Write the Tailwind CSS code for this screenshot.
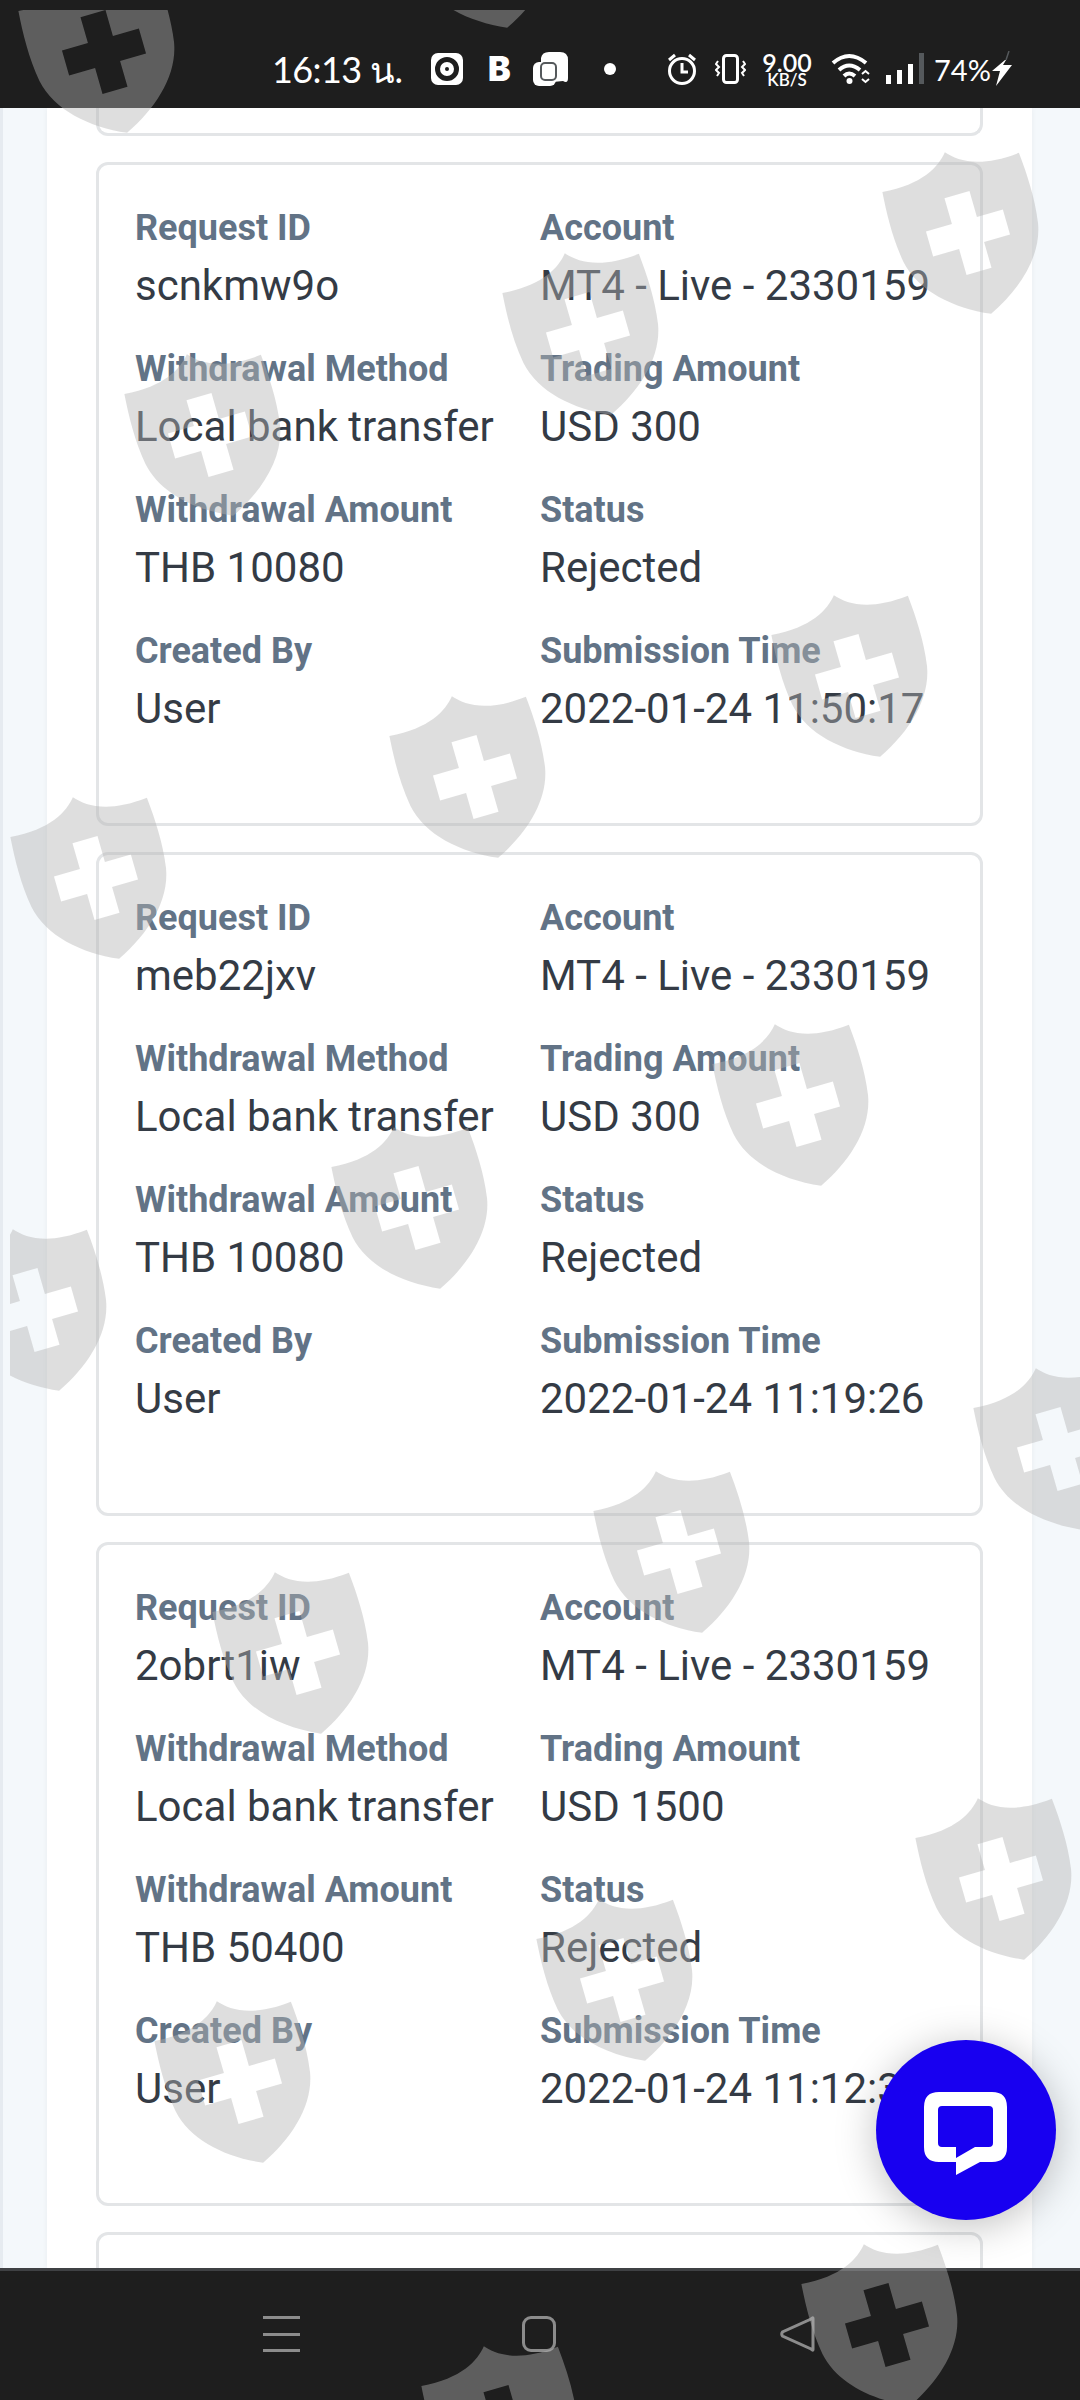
<!DOCTYPE html>
<html lang="en">
<head>
  <meta charset="UTF-8" />
  <title>Withdrawal History</title>
  <script src="https://cdn.jsdelivr.net/npm/@tailwindcss/browser@4"></script>
</head>
<body class="font-['Roboto',sans-serif]">
  <div class="relative w-[1080px] h-[2400px] overflow-hidden flex flex-col bg-[#f4f8fb]">

    <!-- status bar -->
    <div class="h-[108px] shrink-0 bg-[#1e1e1e] text-white flex items-center pl-[272px] pt-[30px]">
      <div class="w-[131px] whitespace-nowrap text-[36px] tracking-[-0.6px] font-normal font-['Lato','Noto_Sans',sans-serif] leading-none">16:13 น.</div>
      <svg class="ml-[28px]" width="32" height="34" viewBox="0 0 32 34">
        <rect x="0" y="1" width="32" height="32" rx="7" fill="#fff" />
        <circle cx="16" cy="17" r="9.5" fill="none" stroke="#1e1e1e" stroke-width="5" />
        <circle cx="16" cy="17" r="2" fill="#1e1e1e" />
      </svg>
      <div class="ml-[25px] w-[23px] text-[34px] font-black leading-none font-['Inter',sans-serif]">B</div>
      <svg class="ml-[22px]" width="35" height="34" viewBox="0 0 35 34">
        <path d="M8 6 Q9 0 16 0 H27 Q35 0 35 8 V26 Q35 32 30 29 L20 30 H8Z" fill="#fff" />
        <rect x="0" y="10" width="23" height="24" rx="6" fill="#fff" />
        <rect x="8" y="11" width="15" height="17" rx="4" fill="none" stroke="#55595c" stroke-width="2" />
      </svg>
      <div class="ml-[36px] w-[12px] h-[12px] rounded-full bg-white"></div>
      <svg class="ml-[51px]" width="30" height="34" viewBox="0 0 30 34">
        <circle cx="15" cy="19" r="12.5" fill="none" stroke="#fff" stroke-width="3" />
        <path d="M15 11 V20 H21" fill="none" stroke="#fff" stroke-width="3" />
        <path d="M2 8 L8 3 M28 8 L22 3" stroke="#fff" stroke-width="3" />
      </svg>
      <svg class="ml-[18px]" width="31" height="30" viewBox="0 0 31 30">
        <rect x="8.500" y="1.500" width="14" height="27" rx="3" fill="none" stroke="#fff" stroke-width="3" />
        <path d="M3 7 L1 10 L4 13 L1 16 L4 19 L2 22 M28 7 L30 10 L27 13 L30 16 L27 19 L29 22" fill="none" stroke="#fff" stroke-width="2" />
      </svg>
      <div class="ml-[17px] w-[48px] flex flex-col items-center font-['Lato',sans-serif] font-semibold">
        <div class="text-[25px] leading-[20px]">9.00</div>
        <div class="text-[17px] leading-[15px]">KB/S</div>
      </div>
      <svg class="ml-[20px]" width="40" height="32" viewBox="0 0 40 32">
        <path d="M2 10 Q18 -4 35 10 M8 17 Q18 8 29 17 M13 23 Q18 18 24 23" fill="none" stroke="#fff" stroke-width="4" />
        <circle cx="18.500" cy="28" r="3" fill="#fff" />
        <path d="M31 21 L34.500 18 L38 21 M31 26 L34.500 29 L38 26" fill="none" stroke="#fff" stroke-width="2" />
      </svg>
      <svg class="ml-[15px]" width="38" height="32" viewBox="0 0 38 32">
        <rect x="0" y="22" width="5" height="9" fill="#fff" />
        <rect x="11" y="17" width="5" height="14" fill="#fff" />
        <rect x="22" y="11" width="5" height="20" fill="#fff" />
        <rect x="33" y="0" width="5" height="31" fill="#55595c" />
      </svg>
      <div class="ml-[10px] w-[52px] text-[29px] leading-none font-['Lato',sans-serif]">74%</div>
      <svg class="ml-[5px]" width="22" height="36" viewBox="0 0 22 36">
        <path d="M14 9 L1 20 H9 L5 35 L21 14 H12 L15 9Z" fill="#fff" />
        <path d="M15 9 L18 0" stroke="#55595c" stroke-width="1.500" />
      </svg>
    </div>

    <!-- page -->
    <div class="flex-1 min-h-0 overflow-hidden pl-[3px] border-l-[3px] border-[#e6ebf0]">
      <div class="ml-[41px] w-[985px] h-full bg-white shadow-[0_0_6px_rgba(0,0,0,0.05)] pl-[49px] flex flex-col gap-[26px]">
        <div class="w-[887px] h-[28px] shrink-0 border-[3px] border-t-0 border-[#e3e5e7] rounded-b-[12px]"></div>

        <div class="w-[887px] h-[664px] shrink-0 border-[3px] border-[#e3e5e7] rounded-[12px] pl-[36px] pt-[35px] grid grid-cols-[405px_405px] auto-rows-[141px] whitespace-nowrap">
          <div><div class="text-[36px] leading-[56px] font-bold text-[#627386]">Request ID</div><div class="text-[42px] leading-[60px] text-[#343b45]">scnkmw9o</div></div>
          <div><div class="text-[36px] leading-[56px] font-bold text-[#627386]">Account</div><div class="text-[42px] leading-[60px] text-[#343b45]">MT4 - Live - 2330159</div></div>
          <div><div class="text-[36px] leading-[56px] font-bold text-[#627386]">Withdrawal Method</div><div class="text-[42px] leading-[60px] text-[#343b45]">Local bank transfer</div></div>
          <div><div class="text-[36px] leading-[56px] font-bold text-[#627386]">Trading Amount</div><div class="text-[42px] leading-[60px] text-[#343b45]">USD 300</div></div>
          <div><div class="text-[36px] leading-[56px] font-bold text-[#627386]">Withdrawal Amount</div><div class="text-[42px] leading-[60px] text-[#343b45]">THB 10080</div></div>
          <div><div class="text-[36px] leading-[56px] font-bold text-[#627386]">Status</div><div class="text-[42px] leading-[60px] text-[#343b45]">Rejected</div></div>
          <div><div class="text-[36px] leading-[56px] font-bold text-[#627386]">Created By</div><div class="text-[42px] leading-[60px] text-[#343b45]">User</div></div>
          <div><div class="text-[36px] leading-[56px] font-bold text-[#627386]">Submission Time</div><div class="text-[42px] leading-[60px] text-[#343b45]">2022-01-24 11:50:17</div></div>
        </div>

        <div class="w-[887px] h-[664px] shrink-0 border-[3px] border-[#e3e5e7] rounded-[12px] pl-[36px] pt-[35px] grid grid-cols-[405px_405px] auto-rows-[141px] whitespace-nowrap">
          <div><div class="text-[36px] leading-[56px] font-bold text-[#627386]">Request ID</div><div class="text-[42px] leading-[60px] text-[#343b45]">meb22jxv</div></div>
          <div><div class="text-[36px] leading-[56px] font-bold text-[#627386]">Account</div><div class="text-[42px] leading-[60px] text-[#343b45]">MT4 - Live - 2330159</div></div>
          <div><div class="text-[36px] leading-[56px] font-bold text-[#627386]">Withdrawal Method</div><div class="text-[42px] leading-[60px] text-[#343b45]">Local bank transfer</div></div>
          <div><div class="text-[36px] leading-[56px] font-bold text-[#627386]">Trading Amount</div><div class="text-[42px] leading-[60px] text-[#343b45]">USD 300</div></div>
          <div><div class="text-[36px] leading-[56px] font-bold text-[#627386]">Withdrawal Amount</div><div class="text-[42px] leading-[60px] text-[#343b45]">THB 10080</div></div>
          <div><div class="text-[36px] leading-[56px] font-bold text-[#627386]">Status</div><div class="text-[42px] leading-[60px] text-[#343b45]">Rejected</div></div>
          <div><div class="text-[36px] leading-[56px] font-bold text-[#627386]">Created By</div><div class="text-[42px] leading-[60px] text-[#343b45]">User</div></div>
          <div><div class="text-[36px] leading-[56px] font-bold text-[#627386]">Submission Time</div><div class="text-[42px] leading-[60px] text-[#343b45]">2022-01-24 11:19:26</div></div>
        </div>

        <div class="w-[887px] h-[664px] shrink-0 border-[3px] border-[#e3e5e7] rounded-[12px] pl-[36px] pt-[35px] grid grid-cols-[405px_405px] auto-rows-[141px] whitespace-nowrap">
          <div><div class="text-[36px] leading-[56px] font-bold text-[#627386]">Request ID</div><div class="text-[42px] leading-[60px] text-[#343b45]">2obrt1iw</div></div>
          <div><div class="text-[36px] leading-[56px] font-bold text-[#627386]">Account</div><div class="text-[42px] leading-[60px] text-[#343b45]">MT4 - Live - 2330159</div></div>
          <div><div class="text-[36px] leading-[56px] font-bold text-[#627386]">Withdrawal Method</div><div class="text-[42px] leading-[60px] text-[#343b45]">Local bank transfer</div></div>
          <div><div class="text-[36px] leading-[56px] font-bold text-[#627386]">Trading Amount</div><div class="text-[42px] leading-[60px] text-[#343b45]">USD 1500</div></div>
          <div><div class="text-[36px] leading-[56px] font-bold text-[#627386]">Withdrawal Amount</div><div class="text-[42px] leading-[60px] text-[#343b45]">THB 50400</div></div>
          <div><div class="text-[36px] leading-[56px] font-bold text-[#627386]">Status</div><div class="text-[42px] leading-[60px] text-[#343b45]">Rejected</div></div>
          <div><div class="text-[36px] leading-[56px] font-bold text-[#627386]">Created By</div><div class="text-[42px] leading-[60px] text-[#343b45]">User</div></div>
          <div><div class="text-[36px] leading-[56px] font-bold text-[#627386]">Submission Time</div><div class="text-[42px] leading-[60px] text-[#343b45]">2022-01-24 11:12:33</div></div>
        </div>

        <div class="w-[887px] h-[664px] shrink-0 border-[3px] border-[#e3e5e7] rounded-[12px]"></div>
      </div>
    </div>

    <!-- nav bar -->
    <div class="h-[132px] shrink-0 bg-[#1e1e1e] border-t-[3px] border-[#3f4144] flex items-start pt-[45px] pl-[263px]">
      <div class="w-[37px] h-[36px] flex flex-col justify-between">
        <div class="h-[3px] bg-[#8c8c8c]"></div>
        <div class="h-[3px] bg-[#8c8c8c]"></div>
        <div class="h-[3px] bg-[#8c8c8c]"></div>
      </div>
      <div class="ml-[222px] w-[34px] h-[36px] rounded-[9px] border-[3px] border-[#8c8c8c]"></div>
      <svg class="ml-[224px]" width="35" height="36" viewBox="0 0 35 36">
        <path d="M33 2.500 V33.500 Q33 35 31 33 L2.500 20 Q1 18 2.500 16 L31 3 Q33 1 33 2.500Z" fill="none" stroke="#8c8c8c" stroke-width="3" />
      </svg>
    </div>

    <!-- watermark layer over the whole screen -->
    <div class="absolute left-[10px] top-[10px] right-0 bottom-0 overflow-hidden pointer-events-none">
      <svg width="1070" height="2390" viewBox="10 10 1070 2390">
        <defs>
          <path id="wm" fill="#b3b3b3" fill-opacity="0.436" fill-rule="evenodd" d="M0 -84 C10 -72 30 -59 71 -63 C73 -40 74 -15 70 10 C64 42 35 68 0 84 C-35 68 -64 42 -70 10 C-74 -15 -73 -40 -71 -63 C-30 -59 -10 -72 0 -84Z M-13 -40 H13 V-13 H40 V13 H13 V40 H-13 V13 H-40 V-13 H-13Z" />
        </defs>
        <use href="#wm" transform="translate(104 52) rotate(-16)" />
        <use href="#wm" transform="translate(484 -53) rotate(-16)" />
        <use href="#wm" transform="translate(968 233) rotate(-16)" />
        <use href="#wm" transform="translate(588 334) rotate(-16)" />
        <use href="#wm" transform="translate(210 435) rotate(-16)" />
        <use href="#wm" transform="translate(857 676) rotate(-16)" />
        <use href="#wm" transform="translate(475 777) rotate(-16)" />
        <use href="#wm" transform="translate(96 878) rotate(-16)" />
        <use href="#wm" transform="translate(798 1105) rotate(-16)" />
        <use href="#wm" transform="translate(417 1208) rotate(-16)" />
        <use href="#wm" transform="translate(36 1310) rotate(-16)" />
        <use href="#wm" transform="translate(1059 1449) rotate(-16)" />
        <use href="#wm" transform="translate(679 1552) rotate(-16)" />
        <use href="#wm" transform="translate(298 1653) rotate(-16)" />
        <use href="#wm" transform="translate(1001 1879) rotate(-16)" />
        <use href="#wm" transform="translate(622 1980) rotate(-16)" />
        <use href="#wm" transform="translate(240 2082) rotate(-16)" />
        <use href="#wm" transform="translate(887 2325) rotate(-16)" />
        <use href="#wm" transform="translate(507 2427) rotate(-16)" />
      </svg>
    </div>

    <!-- chat button -->
    <div class="absolute left-[876px] top-[2040px] w-[180px] h-[180px] rounded-full bg-[#1800f0] shadow-[0_6px_40px_rgba(0,0,0,0.25)]">
      <svg width="180" height="180" viewBox="0 0 180 180">
        <path fill="#fff" fill-rule="evenodd" d="M63 52 H116 Q131 52 131 67 V107 Q131 122 116 122 H104 L80 135 V122 H63 Q48 122 48 107 V67 Q48 52 63 52Z M66 66 H113 Q117 66 117 70 V103 Q117 107 113 107 H99 L80 118 V107 H66 Q62 107 62 103 V70 Q62 66 66 66Z" />
      </svg>
    </div>
  </div>
</body>
</html>
